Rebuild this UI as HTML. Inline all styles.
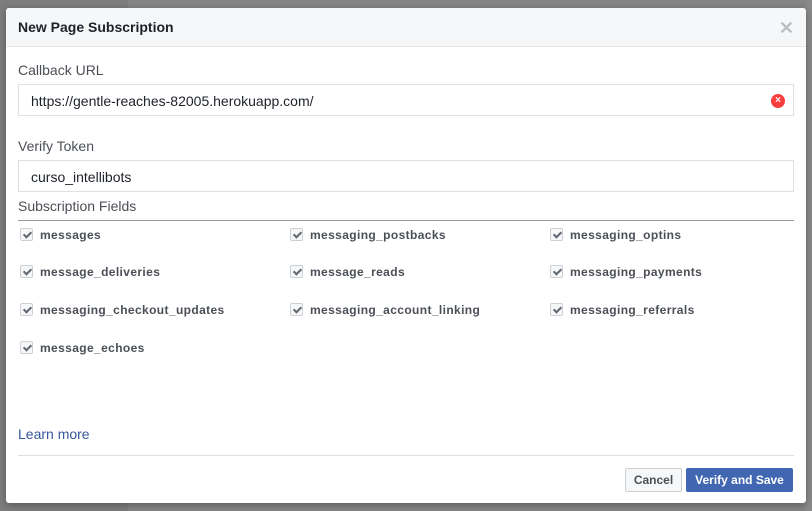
<!DOCTYPE html>
<html><head><style>
*{box-sizing:border-box;margin:0;padding:0}
body{width:812px;height:511px;overflow:hidden;background:#7d7d7d;font-family:"Liberation Sans",Helvetica,Arial,sans-serif;position:relative}
.bgp{position:absolute;left:128px;top:0;width:684px;height:511px;background:#858585}
.side{position:absolute;left:806px;top:0;width:6px;height:511px;background:#8a8a8a}
.dlg{position:absolute;left:6px;top:8px;width:800px;height:495px;background:#fff;border-radius:3px;box-shadow:0 2px 8px rgba(0,0,0,.3)}
.hd{height:39px;background:#f6f7f9;border-bottom:1px solid #e5e5e5;border-radius:3px 3px 0 0;padding:11px 12px;font-weight:bold;font-size:14px;color:#1d2129}
.x{position:absolute;right:12px;top:10px;color:#bcc0c4;font-size:18px;font-weight:bold}
.lbl{position:absolute;left:12px;font-size:14px;color:#4b4f56}
.in{position:absolute;left:12px;width:776px;height:32px;border:1px solid #dddfe2;font-size:14px;color:#1d2129;padding:8px 12px}
.clr{position:absolute;right:8px;top:9px;width:14px;height:14px;border-radius:50%;background:#fa3e3e;color:#fff;font-size:10px;font-weight:bold;text-align:center;line-height:14px}
.line{position:absolute;left:12px;width:776px;height:1px;background:#9a9a9a}
.cb{position:absolute;font-size:12px;font-weight:bold;color:#4b4f56;height:14px;line-height:14px;letter-spacing:0.38px}
.cb i{position:absolute;left:-20px;top:0;width:13px;height:13px;border:1px solid #ccd0d5;border-radius:2px;background:#f6f7f9}
.cb i:after{content:"";position:absolute;left:4px;top:1px;width:3px;height:6px;border:solid #606770;border-width:0 2px 2px 0;transform:rotate(45deg)}
.lm{position:absolute;left:12px;top:418px;font-size:14px;color:#365899}
.fl{position:absolute;left:12px;top:447px;width:776px;height:1px;background:#dddfe2}
.btn{position:absolute;top:460px;height:24px;font-size:12px;font-weight:bold;border-radius:2px;text-align:center;line-height:22px}
</style></head><body>
<div class="bgp"></div><div class="side"></div>
<div class="dlg">
<div class="hd">New Page Subscription</div><div class="x">✕</div>
<div class="lbl" style="top:54px">Callback URL</div>
<div class="in" style="top:76px">https://gentle-reaches-82005.herokuapp.com/<div class="clr">×</div></div>
<div class="lbl" style="top:130px">Verify Token</div>
<div class="in" style="top:152px">curso_intellibots</div>
<div class="lbl" style="top:190px">Subscription Fields</div>
<div class="line" style="top:212px"></div>
<div class="cb" style="left:34px;top:220px"><i></i>messages</div>
<div class="cb" style="left:304px;top:220px"><i></i>messaging_postbacks</div>
<div class="cb" style="left:564px;top:220px"><i></i>messaging_optins</div>
<div class="cb" style="left:34px;top:257px"><i></i>message_deliveries</div>
<div class="cb" style="left:304px;top:257px"><i></i>message_reads</div>
<div class="cb" style="left:564px;top:257px"><i></i>messaging_payments</div>
<div class="cb" style="left:34px;top:295px"><i></i>messaging_checkout_updates</div>
<div class="cb" style="left:304px;top:295px"><i></i>messaging_account_linking</div>
<div class="cb" style="left:564px;top:295px"><i></i>messaging_referrals</div>
<div class="cb" style="left:34px;top:333px"><i></i>message_echoes</div>
<div class="lm">Learn more</div>
<div class="fl"></div>
<div class="btn" style="left:619px;width:57px;background:#f6f7f9;border:1px solid #ced0d4;color:#4b4f56">Cancel</div>
<div class="btn" style="left:680px;width:107px;background:#4267b2;border:1px solid #4267b2;color:#fff">Verify and Save</div>
</div>
</body></html>
